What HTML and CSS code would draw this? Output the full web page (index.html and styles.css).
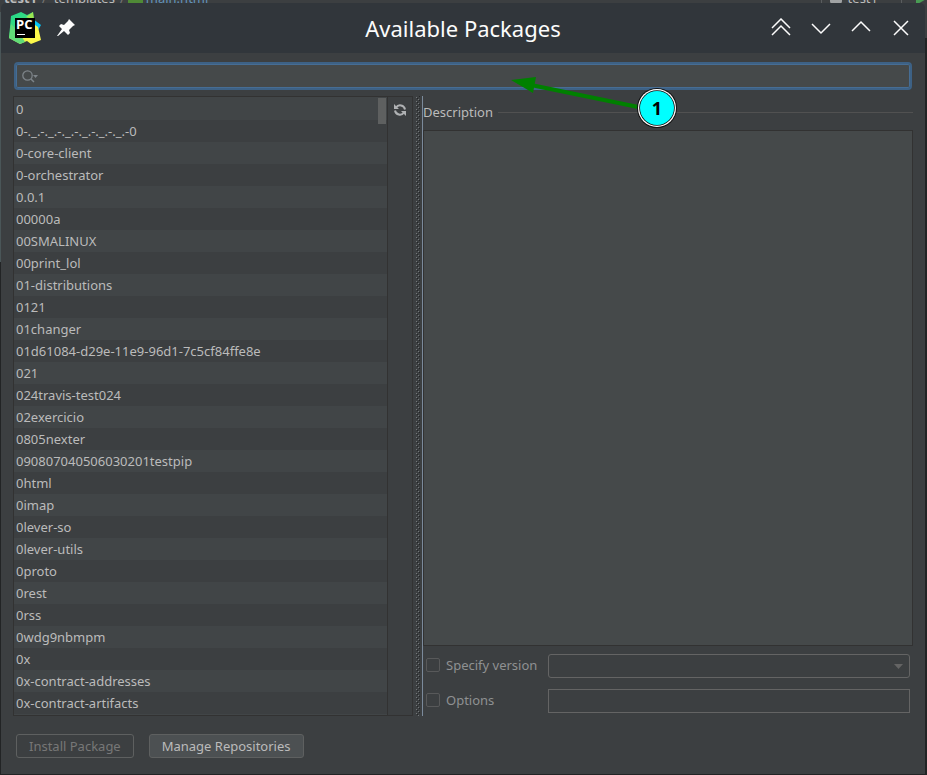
FILE: index.html
```html
<!DOCTYPE html>
<html lang="en">
<head>
<meta charset="utf-8">
<title>Available Packages</title>
<link rel="stylesheet" href="styles.css">
</head>
<body>
<div class="backdrop" aria-hidden="true">
  <div class="crumbs">
    <b>test1</b><span class="sep">/</span><span>templates</span><span class="sep">/</span><span class="file-icon"></span><span class="file">main.html</span>
    <span class="run"><span class="run-icon"></span><span>test1</span></span>
    <svg class="play" width="12" height="14" viewBox="0 0 12 14"><path d="M0 0L12 7L0 14Z" fill="#499c54"/></svg>
  </div>
</div>
<main class="dialog">
  <header class="titlebar">
    <svg class="logo" width="32" height="32" viewBox="0 0 32 32">
      <defs>
        <linearGradient id="g" x1="0" y1="0" x2=".6" y2="1"><stop offset="0" stop-color="#21d789"/><stop offset=".6" stop-color="#3bdc80"/><stop offset="1" stop-color="#a5e65a"/></linearGradient>
        <linearGradient id="y" x1="0" y1="1" x2="1" y2="0"><stop offset="0" stop-color="#7be36a"/><stop offset=".4" stop-color="#fcf84a"/><stop offset="1" stop-color="#fcf84a"/></linearGradient>
      </defs>
      <path d="M24 7L32 13L28 20L20 18Z" fill="#07c3f2"/>
      <path d="M2 4L12 0L18 3L24 0L25 8L10 26L0 26Z" fill="url(#g)"/>
      <path d="M17 5L24 0L25 8Z" fill="#9be552"/>
      <path d="M0 26L4 15L10 20L26 13L29 15L32 28L22 32L18 29L11 32Z" fill="url(#y)"/>
      <path d="M0 26L2 12L10 20L16 30L11 32Z" fill="#61dc78"/>
      <rect x="6" y="6" width="20" height="20" fill="#000"/>
      <text class="logo-text" x="7" y="17">PC</text>
      <rect x="8" y="22" width="8" height="1" fill="#fff"/>
    </svg>
    <button class="pin" aria-label="Keep above others"><svg width="18" height="18" viewBox="0 0 18 18"><path d="M12 0L18 6L16 7L12 11L13 14L11 16L7 12L1 17L0 17L5 10L2 7L4 5L7 6L11 2Z" fill="#fcfcfc"/></svg></button>
    <h1>Available Packages</h1>
    <div class="controls">
      <button aria-label="Shade"><svg viewBox="0 0 20 20"><path d="M1 10L10 1L19 10M1 17L10 8L19 17"/></svg></button>
      <button aria-label="Minimize"><svg viewBox="0 0 20 20"><path d="M1 6L10 15L19 6"/></svg></button>
      <button aria-label="Maximize"><svg viewBox="0 0 20 20"><path d="M1 13L10 4L19 13"/></svg></button>
      <button aria-label="Close"><svg viewBox="0 0 20 20"><path d="M3 3L17 17M17 3L3 17"/></svg></button>
    </div>
  </header>
  <div class="content">
    <label class="search">
      <svg width="17" height="13" viewBox="0 0 17 13"><circle cx="5.5" cy="5.5" r="4.7" fill="none" stroke="#7d8489" stroke-width="1.3"/><path d="M9 9L12 12" stroke="#7d8489" stroke-width="1.5"/><path d="M11 5H16L13.500 8Z" fill="#7d8489"/></svg>
      <input type="text" aria-label="Search packages">
    </label>
    <div class="split">
      <section class="packages">
        <div class="list-wrap">
          <ul class="list">
            <li>0</li><li>0-._.-._.-._.-._.-._.-._.-0</li><li>0-core-client</li><li>0-orchestrator</li><li>0.0.1</li><li>00000a</li><li>00SMALINUX</li><li>00print_lol</li><li>01-distributions</li><li>0121</li><li>01changer</li><li>01d61084-d29e-11e9-96d1-7c5cf84ffe8e</li><li>021</li><li>024travis-test024</li><li>02exercicio</li><li>0805nexter</li><li>090807040506030201testpip</li><li>0html</li><li>0imap</li><li>0lever-so</li><li>0lever-utils</li><li>0proto</li><li>0rest</li><li>0rss</li><li>0wdg9nbmpm</li><li>0x</li><li>0x-contract-addresses</li><li>0x-contract-artifacts</li>
          </ul>
          <span class="thumb"></span>
        </div>
        <div class="tools">
          <button aria-label="Reload list of packages"><svg width="12" height="12" viewBox="0 0 12 12"><g fill="none" stroke="#afb1b3" stroke-width="2"><path d="M2 3.500A5 5 0 0 1 11 5.500"/><path d="M10 8.500A5 5 0 0 1 1 6.500"/></g><path d="M0 0V5H5ZM12 12V7H7Z" fill="#afb1b3"/></svg></button>
        </div>
      </section>
      <div class="splitter"></div>
      <section class="details">
        <h2>Description</h2>
        <div class="description"></div>
        <div class="form">
          <label class="check"><input type="checkbox" disabled>Specify version</label>
          <div class="select"><select aria-label="Version" disabled><option></option></select><svg width="9" height="5" viewBox="0 0 9 5"><path d="M0 0H9L4.500 5Z" fill="#646464"/></svg></div>
          <label class="check"><input type="checkbox" disabled>Options</label>
          <input class="field" type="text" aria-label="Installation options" disabled>
        </div>
      </section>
    </div>
    <footer class="actions">
      <button disabled>Install Package</button>
      <button>Manage Repositories</button>
    </footer>
  </div>
</main>
<svg class="callout" width="168" height="56" viewBox="0 0 168 56">
  <path d="M20 11L132 34" stroke="#008000" stroke-width="4"/>
  <path d="M0 6L25 3L22 19Z" fill="#008000"/>
  <circle cx="146" cy="34" r="20" fill="#111"/>
  <circle cx="146" cy="34" r="19" fill="#fff"/>
  <circle cx="146" cy="34" r="17.800" fill="#111"/>
  <circle cx="146" cy="34" r="17" fill="#0ff"/>
  <text x="146" y="41" text-anchor="middle">1</text>
</svg>
</body>
</html>
```
FILE: styles.css
```css
* { box-sizing: border-box; }
body {
  margin: 0;
  min-height: 100vh;
  display: flex;
  flex-direction: column;
  position: relative;
  background: #222425;
  color: #bbbbbb;
  font: 13px/18px "Noto Sans", sans-serif;
}
button, input, select { font: inherit; color: inherit; margin: 0; }
button { padding: 0; border: 0; background: none; }
svg { display: block; }

.backdrop {
  position: absolute;
  inset: 0;
  overflow: hidden;
  background: linear-gradient(90deg, #4a5658 1px, transparent 1px) 0 12px / 100% 250px no-repeat, linear-gradient(#3c3f41 38px, #222425 38px);
}
.crumbs {
  display: flex;
  align-items: center;
  height: 18px;
  margin-top: -11px;
  padding: 0 0 0 4px;
}
.sep { margin: 0 7px 0 5px; color: #777; }
.file-icon { width: 15px; height: 8px; background: #4f8a36; align-self: end; margin: 0 3px 3px 0; }
.file { color: #6293bb; }
.crumbs .file-icon { margin-left: -4px; }
.run { display: flex; align-items: center; margin-left: auto; padding: 0 23px 0 8px; border: solid #5a5d5f; border-width: 0 1px; }
.run-icon { width: 12px; height: 11px; margin-right: 6px; border-radius: 3px; background: #a0a2a3; }
.play { margin: 0 -1px 0 14px; }

.dialog {
  position: relative;
  flex: 1;
  display: flex;
  flex-direction: column;
  margin: 3px 2px 1px 1px;
  border-radius: 5px 5px 0 0;
  background: #3c3f41;
}
.titlebar {
  display: grid;
  grid-template-columns: 1fr auto 1fr;
  align-items: center;
  height: 50px;
  padding: 0 4px 0 8px;
  border-radius: 5px 5px 0 0;
  background: #31363b;
  color: #fcfcfc;
}
.titlebar h1 {
  grid-area: 1 / 1 / 2 / 4;
  margin: 0 4px 0 0;
  text-align: center;
  font-size: 22px;
  font-weight: 400;
  line-height: 30px;
}
.logo { grid-area: 1 / 1; }
.logo-text { font: 700 13px "Open Sans", sans-serif; fill: #fff; }
.pin { grid-area: 1 / 1; justify-self: start; margin-left: 48px; }
.controls { grid-area: 1 / 3; display: flex; justify-content: flex-end; z-index: 1; }
.controls button { width: 40px; height: 40px; padding: 10px; }
.controls svg { width: 20px; height: 20px; fill: none; stroke: #fcfcfc; stroke-width: 1.5; }

.content { flex: 1; display: flex; flex-direction: column; padding: 9px 12px 16px; }
.search {
  display: flex;
  align-items: center;
  height: 28px;
  margin: 0 1px 0 0;
  padding: 0 6px;
  border: 2px solid #3d6185;
  border-radius: 4px;
  background: #45494a;
  box-shadow: inset 0 0 0 1px #466d94;
}
.search { margin-left: 1px; }
.search input { flex: 1; min-width: 0; border: 0; background: none; outline: 0; }

.split { flex: 1; display: flex; margin-top: 6px; }
.packages { flex: 0 0 400px; display: flex; border: 1px solid #323232; }
.list-wrap { position: relative; flex: 1; background: #414547; }
.list { list-style: none; margin: 0; padding: 1px 0 0; }
.list li { height: 22px; padding: 2px; background: #414547; white-space: nowrap; }
.list li:nth-child(even) { background: #3c3f41; }
.thumb { position: absolute; top: 1px; right: 1px; width: 8px; height: 26px; background: #5e6060; }
.tools { width: 25px; padding: 7px 0 0 6px; border-left: 1px solid #323232; }
.tools button { display: block; }
.splitter {
  flex: 0 0 10px;
  border-right: 1px solid #7b8a9b;
  background: conic-gradient(from 270deg at 1px 1px, #74787a 25%, transparent 0) 3px 1px / 2px 4px repeat-y,
    conic-gradient(from 270deg at 1px 1px, #74787a 25%, transparent 0) 5px 3px / 2px 4px repeat-y,
    conic-gradient(from 270deg at 1px 1px, #232526 25%, transparent 0) 4px 2px / 2px 4px repeat-y,
    conic-gradient(from 270deg at 1px 1px, #232526 25%, transparent 0) 6px 4px / 2px 4px repeat-y;
}
.details { flex: 1; min-width: 0; display: flex; flex-direction: column; }
.details h2 {
  display: flex;
  align-items: center;
  gap: 5px;
  height: 34px;
  margin: 0;
  padding-bottom: 2px;
  font-size: 13px;
  font-weight: 400;
}
.details h2::after { content: ""; flex: 1; height: 1px; background: #515151; }
.description { flex: 1; border: 1px solid #323232; background: #45494a; }
.form {
  display: grid;
  grid-template-columns: auto 1fr;
  gap: 11px;
  align-items: center;
  padding: 8px 3px 3px;
}
.check { display: flex; align-items: center; gap: 6px; padding-bottom: 2px; color: #8f9192; }
.check input { appearance: none; width: 14px; height: 14px; border: 1px solid #58595a; border-radius: 2px; }
.select { position: relative; height: 24px; }
.select select { appearance: none; display: block; width: 100%; height: 24px; border: 1px solid #646464; border-radius: 3px; background: none; opacity: 1; }
.select svg { position: absolute; right: 7px; top: 10px; }
.field { min-width: 0; height: 24px; border: 1px solid #646464; background: none; }

.actions { display: flex; gap: 15px; margin: 18px 3px 0; }
.actions button { height: 24px; padding: 0 12px; border: 1px solid #5e6060; border-radius: 3px; background: #4c5052; }
.actions button:disabled { background: none; color: #777777; }

.callout { position: absolute; left: 511px; top: 74px; }
.callout text { font: 700 18px "Noto Sans", sans-serif; fill: #000; }
```
